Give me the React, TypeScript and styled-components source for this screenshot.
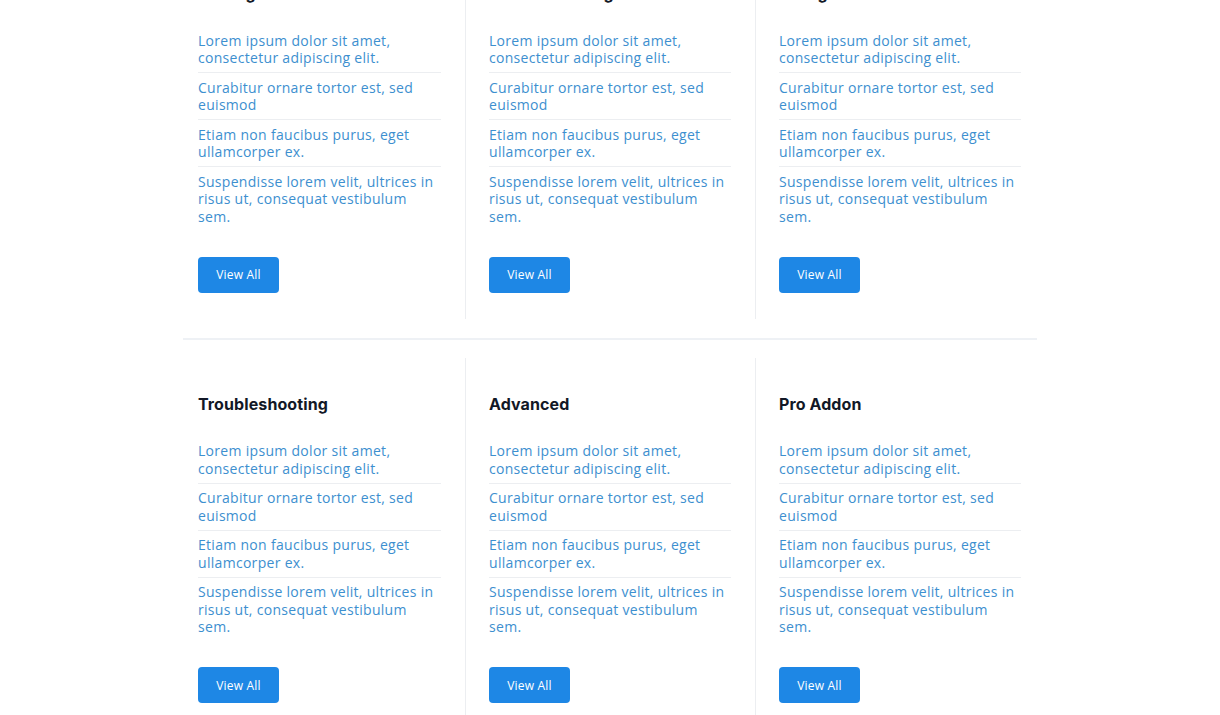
import React from "react";
import styled, { createGlobalStyle } from "styled-components";

const Global = createGlobalStyle`
  html, body { margin: 0; padding: 0; background: #ffffff; }
  body { font-family: "Open Sans", "Liberation Sans", sans-serif; }
  * { box-sizing: border-box; }
`;

const Page = styled.main`
  width: 870px;
  margin: -53px auto 0;
`;

const Row = styled.section`
  display: grid;
  grid-template-columns: repeat(3, 290px);
`;

const Separator = styled.hr`
  border: 0;
  border-top: 2px solid #eef1f5;
  margin: 19px 8px 18px;
`;

const Column = styled.div<{ $first?: boolean }>`
  padding: 34px 24px 26px 23px;
  border-left: ${(p) => (p.$first ? "0" : "1px solid #eceef1")};
`;

const Heading = styled.h3`
  margin: 0 0 21px;
  font-family: Inter, "Liberation Sans", sans-serif;
  font-weight: 700;
  font-size: 16px;
  line-height: 24px;
  color: #121826;
  letter-spacing: 0.1px;
`;

const List = styled.ul`
  list-style: none;
  margin: 0;
  padding: 0;
`;

const Item = styled.li`
  padding: 5.5px 0;
  border-bottom: 1px solid #eceef1;
  font-size: 14px;
  line-height: 17.5px;
  color: #3d8fcf;
  letter-spacing: 0.3px;
  &:last-child { border-bottom: 0; }
`;

const Button = styled.button`
  margin-top: 26px;
  width: 81px;
  height: 36px;
  border: 0;
  border-radius: 4px;
  background: #1e87e5;
  color: #ffffff;
  font-family: "Open Sans", "Liberation Sans", sans-serif;
  font-size: 12px;
  letter-spacing: 0.2px;
  cursor: pointer;
`;

const items = [
  "Lorem ipsum dolor sit amet, consectetur adipiscing elit.",
  "Curabitur ornare tortor est, sed euismod",
  "Etiam non faucibus purus, eget ullamcorper ex.",
  "Suspendisse lorem velit, ultrices in risus ut, consequat vestibulum sem.",
];

const rows = [
  ["Getting Started", "Account Management", "Billing"],
  ["Troubleshooting", "Advanced", "Pro Addon"],
];

export default function App() {
  return (
    <>
      <Global />
      <Page>
        {rows.map((row, ri) => (
          <React.Fragment key={ri}>
            {ri > 0 && <Separator />}
            <Row>
              {row.map((title, ci) => (
                <Column key={title} $first={ci === 0}>
                  <Heading>{title}</Heading>
                  <List>
                    {items.map((t) => (
                      <Item key={t}>{t}</Item>
                    ))}
                  </List>
                  <Button>View All</Button>
                </Column>
              ))}
            </Row>
          </React.Fragment>
        ))}
      </Page>
    </>
  );
}
